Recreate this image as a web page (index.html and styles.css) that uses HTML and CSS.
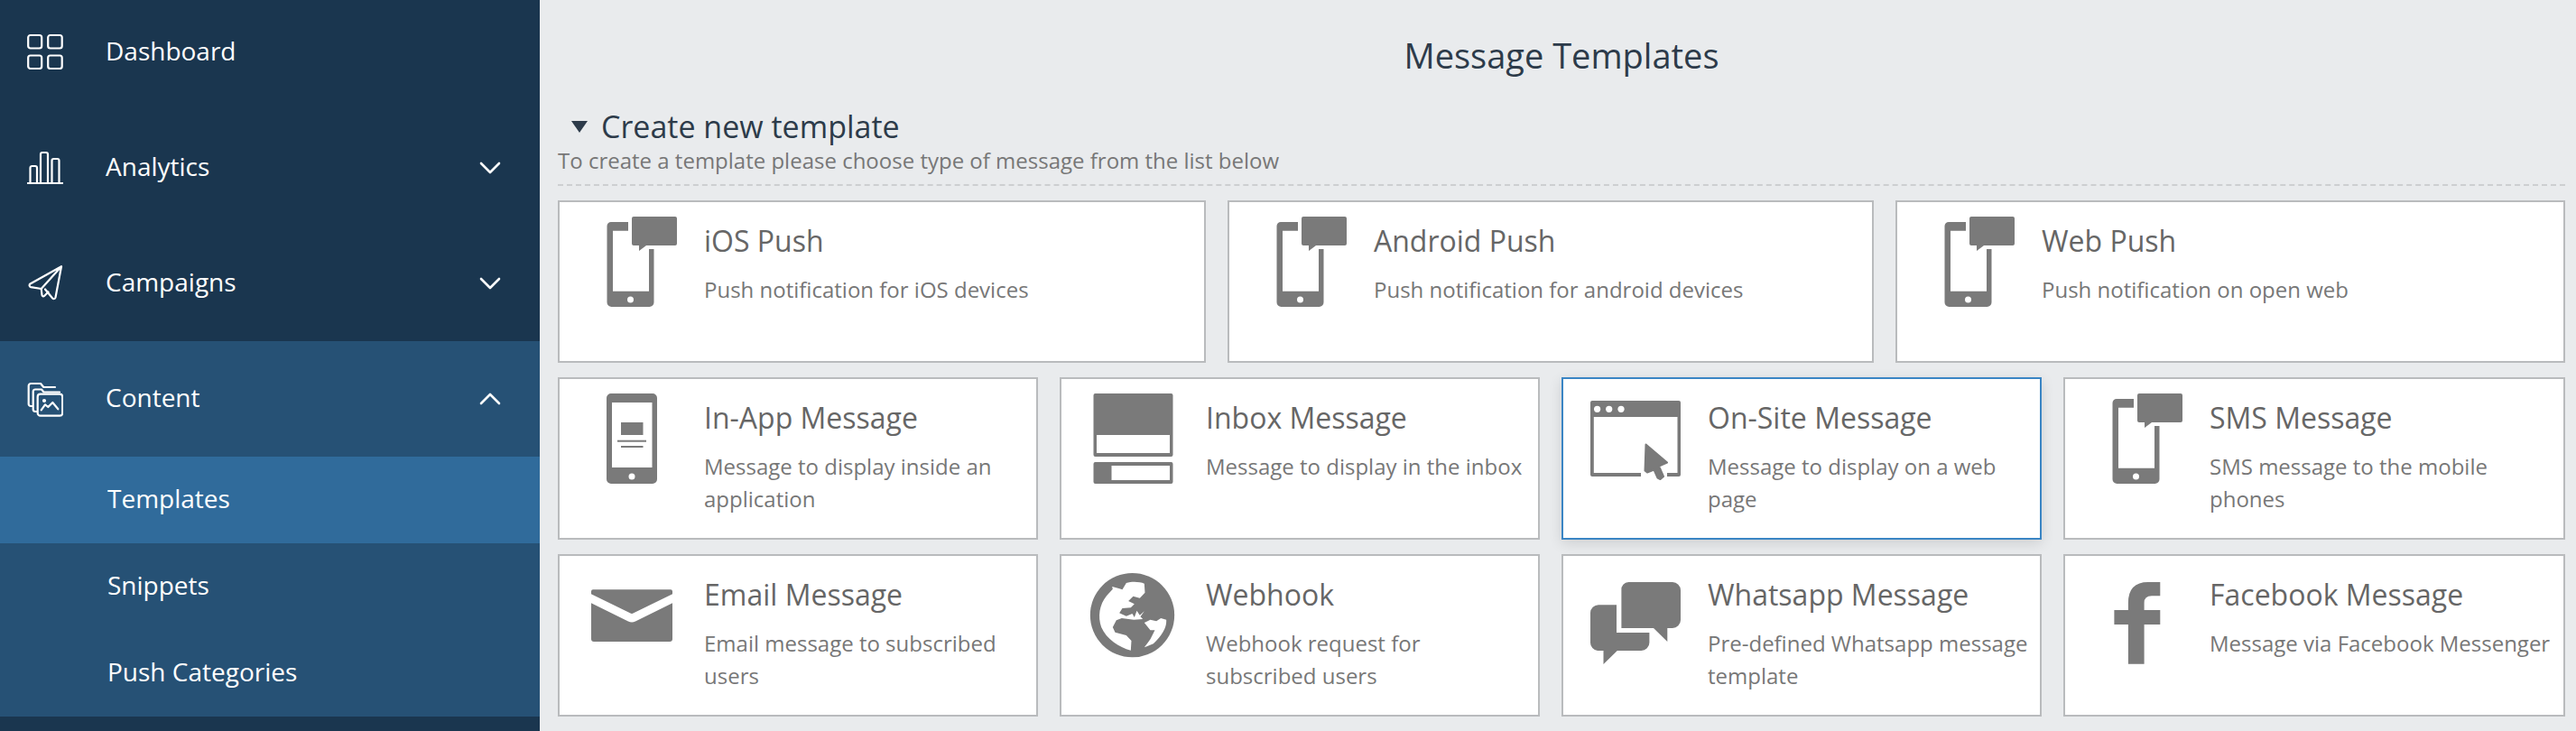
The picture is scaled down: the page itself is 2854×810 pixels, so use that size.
FILE: index.html
```html
<!DOCTYPE html>
<html lang="en">
<head>
	<meta charset="UTF-8">
	<title>Message Templates</title>
	<link rel="stylesheet" href="styles.css">
</head>
<body>
<svg class="defs" width="0" height="0">
	<symbol id="push" viewBox="0 0 100 110">
		<path d="M46 6H27a4.5 4.5 0 0 0-4.5 4.500V95a5 5 0 0 0 5 5H69.500a5 5 0 0 0 5-5V36H69V82.700H29V15.700H46Z"/>
		<path d="M52 0H98a2 2 0 0 1 2 2V30a2 2 0 0 1-2 2H66L58 38V32H52a2 2 0 0 1-2-2V2a2 2 0 0 1 2-2Z"/>
		<circle cx="48.500" cy="92" r="3.500" fill="#fff"/>
	</symbol>
</svg>
<div id="app">
	<div id="sidebar">
		<ul class="nav">
			<li class="nav-item first">
				<svg class="nav-icon" viewBox="0 0 40 40"><rect x="1.200" y="2" width="15" height="14.500" rx="2.500"/><rect x="23.200" y="2" width="15.500" height="14.500" rx="2.500"/><rect x="1.200" y="24.500" width="15" height="14.500" rx="2.500"/><rect x="23.200" y="24.500" width="15.500" height="14.500" rx="2.500"/></svg>
				<span class="nav-text">Dashboard</span>
			</li>
			<li class="nav-item">
				<svg class="nav-icon" viewBox="0 0 40 40"><path d="M0.500 37H39.500"/><path d="M3.500 37V20a2 2 0 0 1 2-2H9a2 2 0 0 1 2 2V37"/><path d="M15 37V5a2 2 0 0 1 2-2H21a2 2 0 0 1 2 2V37"/><path d="M27.500 37V12a2 2 0 0 1 2-2H33.500a2 2 0 0 1 2 2V37"/></svg>
				<span class="nav-text">Analytics</span>
				<svg class="chevron" viewBox="0 0 24 14"><path d="M2 2L12 12L22 2"/></svg>
			</li>
			<li class="nav-item">
				<svg class="nav-icon" viewBox="0 0 40 40"><path d="M38 1.200L3.500 20.500a2 2 0 0 0 .6 3.600L15.700 26L38 1.200L31.500 35.500a2 2 0 0 1-3.300 1L20 26.500"/><path d="M15.700 26L16.500 33a1.500 1.500 0 0 0 2.500 1L23.500 29.500"/></svg>
				<span class="nav-text">Campaigns</span>
				<svg class="chevron" viewBox="0 0 24 14"><path d="M2 2L12 12L22 2"/></svg>
			</li>
			<li class="nav-item open">
				<svg class="nav-icon" viewBox="0 0 40 40"><path d="M6 28H4a2.300 2.300 0 0 1-2.300-2.300V5.500A2.500 2.500 0 0 1 4.200 3H15l3.300 4H31"/><path d="M11 34H9a2.500 2.500 0 0 1-2.300-2.500V12a2.500 2.500 0 0 1 2.500-2.500H16l2.500 3H36"/><rect x="11.700" y="14.700" width="27.500" height="24" rx="3"/><circle cx="19" cy="22" r="1"/><path d="M15.700 32.300L20 26.300L23.300 29L28.300 24L34.300 31.300"/></svg>
				<span class="nav-text">Content</span>
				<svg class="chevron" viewBox="0 0 24 14"><path d="M2 12L12 2L22 12"/></svg>
			</li>
			<li class="sub-item active">Templates</li>
			<li class="sub-item">Snippets</li>
			<li class="sub-item">Push Categories</li>
		</ul>
	</div>
	<div id="main">
		<h1 class="page-title">Message Templates</h1>
		<h2 class="section-title"><span class="arrow"></span>Create new template</h2>
		<p class="section-sub">To create a template please choose type of message from the list below</p>

		<div class="row row-3">
			<div class="card">
				<svg class="card-icon"><use href="#push"/></svg>
				<div class="card-body"><div class="card-title">iOS Push</div><div class="card-desc">Push notification for iOS devices</div></div>
			</div>
			<div class="card">
				<svg class="card-icon"><use href="#push"/></svg>
				<div class="card-body"><div class="card-title">Android Push</div><div class="card-desc">Push notification for android devices</div></div>
			</div>
			<div class="card">
				<svg class="card-icon"><use href="#push"/></svg>
				<div class="card-body"><div class="card-title">Web Push</div><div class="card-desc">Push notification on open web</div></div>
			</div>
		</div>

		<div class="row row-4">
			<div class="card">
				<svg class="card-icon" viewBox="0 0 100 110">
					<path fill-rule="evenodd" d="M27 0H73a5 5 0 0 1 5 5V95a5 5 0 0 1-5 5H27a5 5 0 0 1-5-5V5a5 5 0 0 1 5-5ZM28 10V82H72.500V10Z"/>
					<circle cx="50" cy="92" r="3.500" fill="#fff"/>
					<rect x="38" y="32" width="24.500" height="14"/>
					<rect x="34" y="51.700" width="32" height="2"/>
					<rect x="38" y="58" width="24.500" height="2"/>
				</svg>
				<div class="card-body"><div class="card-title">In-App Message</div><div class="card-desc">Message to display inside an application</div></div>
			</div>
			<div class="card">
				<svg class="card-icon" viewBox="0 0 100 110">
					<path fill-rule="evenodd" d="M7.500 0H91.500a2 2 0 0 1 2 2V68a2 2 0 0 1-2 2H7.500a2 2 0 0 1-2-2V2a2 2 0 0 1 2-2ZM9 46V66H90V46Z"/>
					<path fill-rule="evenodd" d="M7.500 76H91.500a2 2 0 0 1 2 2V98a2 2 0 0 1-2 2H7.500a2 2 0 0 1-2-2V78a2 2 0 0 1 2-2ZM25.500 80V96H90V80Z"/>
				</svg>
				<div class="card-body"><div class="card-title">Inbox Message</div><div class="card-desc">Message to display in the inbox</div></div>
			</div>
			<div class="card selected">
				<svg class="card-icon" viewBox="0 0 100 110">
					<path d="M2 8H98a2 2 0 0 1 2 2V90a2 2 0 0 1-2 2H85V88H96.500V26H3.800V88H56V92H2a2 2 0 0 1-2-2V10a2 2 0 0 1 2-2Z"/>
					<circle cx="7.600" cy="17.300" r="3.600" fill="#fff"/><circle cx="20.700" cy="17.300" r="3.600" fill="#fff"/><circle cx="34" cy="17.300" r="3.600" fill="#fff"/>
					<path class="cursor" d="M61.500 56.500L85 76.500L76 80.500L81 92L77.500 95L74.500 93.500L70.500 84.500L63 87.500L60.500 85.500Z"/>
				</svg>
				<div class="card-body"><div class="card-title">On-Site Message</div><div class="card-desc">Message to display on a web page</div></div>
			</div>
			<div class="card">
				<svg class="card-icon"><use href="#push"/></svg>
				<div class="card-body"><div class="card-title">SMS Message</div><div class="card-desc">SMS message to the mobile phones</div></div>
			</div>
		</div>

		<div class="row row-4">
			<div class="card">
				<svg class="card-icon" viewBox="0 0 100 110">
					<path d="M7 21.300H93a2 2 0 0 1 2 2V26.300L52 47.300a4 4 0 0 1-4 0L5 26.300V23.300a2 2 0 0 1 2-2Z"/>
					<path d="M5 36.300L46 56.500a9 9 0 0 0 8 0L95 36.300V76a3 3 0 0 1-3 3H8a3 3 0 0 1-3-3Z"/>
				</svg>
				<div class="card-body"><div class="card-title">Email Message</div><div class="card-desc">Email message to subscribed users</div></div>
			</div>
			<div class="card">
				<svg class="card-icon" viewBox="0 0 100 110">
					<g transform="translate(-6.500 -2) scale(.3333)">
						<circle cx="165" cy="155" r="140"/>
						<path fill="#fff" d="M145 48C165 42 190 44 205 50L207 80L190 98L168 92L152 108L172 118L160 130L132 132L122 148L145 158L165 150L172 162L180 140L190 155L205 142L192 160L200 168L170 170L130 165L112 172L100 195L108 212L145 222L162 240L160 272C120 262 80 235 62 195C50 160 55 120 80 90L100 68L98 60L120 66L132 70Z"/>
						<path fill="#fff" d="M205 180L225 170L245 175L260 165L278 170C280 195 265 220 235 250L205 262L225 235L240 205L225 205Z"/>
					</g>
				</svg>
				<div class="card-body"><div class="card-title">Webhook</div><div class="card-desc">Webhook request for<br>subscribed users</div></div>
			</div>
			<div class="card">
				<svg class="card-icon" viewBox="0 0 100 110">
					<path d="M42 13H91a9 9 0 0 1 9 9V55a9 9 0 0 1-9 9H85.300V79L70 64H34.400V22a8 8 0 0 1 8-9Z"/>
					<path d="M29 38.300V69H65.400V80a9 9 0 0 1-9 9H29.800L14.500 104V89H8a9 9 0 0 1-8-9V47a9 9 0 0 1 9-8.700Z"/>
				</svg>
				<div class="card-body"><div class="card-title">Whatsapp Message</div><div class="card-desc">Pre-defined Whatsapp message template</div></div>
			</div>
			<div class="card">
				<svg class="card-icon" viewBox="0 0 100 110">
					<path d="M75.300 13V28.300H66Q57.600 28.300 57.600 36V44H75.300V60H57.600V103.700H39.900V60H24.400V44H39.900V36Q39.900 13 62 13Z"/>
				</svg>
				<div class="card-body"><div class="card-title">Facebook Message</div><div class="card-desc">Message via Facebook Messenger</div></div>
			</div>
		</div>
	</div>
</div>
</body>
</html>
```

FILE: styles.css
```css
* {
	margin: 0;
	padding: 0;
	box-sizing: border-box;
}
html, body {
	height: 810px;
	overflow: hidden;
}
body {
	font-family: "Open Sans", "Liberation Sans", sans-serif;
	background-color: #e9ebed;
}
.defs {
	display: block;
	height: 0;
}
#app {
	display: flex;
	height: 810px;
}

/* sidebar */
#sidebar {
	width: 598px;
	flex-shrink: 0;
	background-color: #1a364f;
}
.nav {
	list-style: none;
	color: #fff;
}
.nav-item {
	display: flex;
	align-items: center;
	height: 128px;
	padding: 0 43px 0 30px;
	font-size: 28px;
}
.nav-item.first {
	height: 122px;
	padding-top: 0;
	align-items: flex-start;
}
.nav-item.first .nav-icon {
	margin-top: 37px;
}
.nav-item.first .nav-text {
	margin-top: 38px;
}
.nav-item.open {
	background-color: #265175;
}
.nav-icon {
	width: 40px;
	height: 40px;
	margin-right: 47px;
	flex-shrink: 0;
	fill: none;
	stroke: #fff;
	stroke-width: 2.200;
	stroke-linejoin: round;
	stroke-linecap: round;
}
.nav-text {
	flex: 1;
	line-height: 36px;
	padding-bottom: 4px;
}
.chevron {
	width: 24px;
	height: 14px;
	fill: none;
	stroke: #fff;
	stroke-width: 2.600;
	stroke-linecap: round;
	stroke-linejoin: round;
}
.sub-item {
	height: 96px;
	line-height: 93px;
	padding-left: 119px;
	font-size: 28px;
	background-color: #265175;
}
.sub-item.active {
	background-color: #306b9b;
}

/* main */
#main {
	flex: 1;
	padding: 0 12px 0 20px;
	min-width: 0;
}
.page-title {
	height: 124px;
	padding-top: 35px;
	line-height: 52px;
	text-align: center;
	font-size: 38px;
	font-weight: 400;
	color: #2d3b4a;
}
.section-title {
	display: flex;
	align-items: center;
	height: 40px;
	margin-top: -4px;
	padding-left: 15px;
	font-size: 34px;
	font-weight: 400;
	color: #2d3b4a;
}
.arrow {
	width: 0;
	height: 0;
	margin-right: 15px;
	border-left: 9px solid transparent;
	border-right: 9px solid transparent;
	border-top: 13px solid #2d3b4a;
}
.section-sub {
	height: 46px;
	line-height: 36px;
	font-size: 24px;
	color: #777;
	border-bottom: 2px dashed #cdcfd1;
}
.row {
	display: grid;
	column-gap: 24px;
	margin-top: 16px;
}
.row-3 {
	grid-template-columns: 718px 716px 1fr;
}
.row-4 {
	grid-template-columns: 532px 532px 532px 1fr;
}
.card {
	display: flex;
	height: 180px;
	padding: 16px 6px 0 30px;
	background-color: #fff;
	border: 2px solid #b9bbbd;
}
.card.selected {
	border-color: #3a85c4;
	box-shadow: 0 4px 14px rgba(0,0,0,.12);
}
.card-icon {
	width: 100px;
	height: 110px;
	margin-right: 30px;
	flex-shrink: 0;
	fill: #7a7a7a;
}
.cursor {
	stroke: #7a7a7a;
	stroke-width: 2;
	stroke-linejoin: round;
}
.card-title {
	margin-top: 3px;
	line-height: 48px;
	font-size: 32px;
	color: #666;
}
.card-desc {
	margin-top: 12px;
	line-height: 36px;
	font-size: 24px;
	color: #777;
}
```
